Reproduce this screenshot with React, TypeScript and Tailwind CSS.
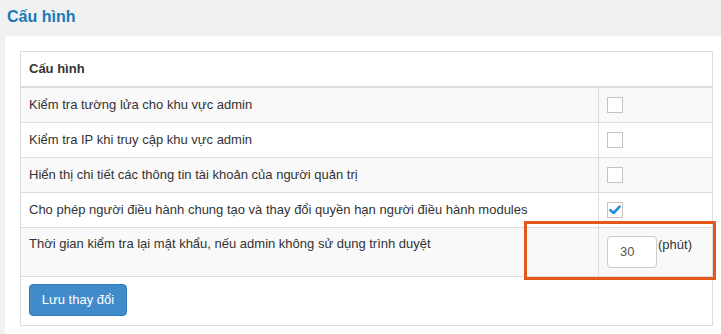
import React from 'react';

const rows = [
    { label: 'Kiểm tra tường lửa cho khu vực admin', checked: false },
    { label: 'Kiểm tra IP khi truy cập khu vực admin', checked: false },
    { label: 'Hiển thị chi tiết các thông tin tài khoản của người quản trị', checked: false },
    { label: 'Cho phép người điều hành chung tạo và thay đổi quyền hạn người điều hành modules', checked: true },
];

const Checkbox = ({ checked }: { checked: boolean }) => (
    <span className="flex items-center justify-center w-[16px] h-[16px] border border-[#c4c4c4] bg-white">
        {checked && (
            <svg width="12" height="10" viewBox="0 0 12 10">
                <path d="M1.5 5.2 L4.6 8 L10.6 1.6" fill="none" stroke="#2a8dd4" strokeWidth="2.6" strokeLinecap="round" strokeLinejoin="round" />
            </svg>
        )}
    </span>
);

const App = () => {
    return (
        <div className="relative w-[721px] h-[334px] overflow-hidden bg-[#f1f1f1] text-[13px] text-[#333]" style={{ fontFamily: '"Liberation Sans", Arial, sans-serif' }}>
            <div className="h-[36px] px-[7px] pt-[7px]">
                <h1 className="text-[16px] leading-[20px] font-bold text-[#1a7ab8]">Cấu hình</h1>
            </div>

            <div className="ml-[5px] h-[298px] bg-white pt-[15px] pl-[15px]">
                <div className="w-[693px] border border-[#ddd]">
                    <div className="h-[36px] flex items-center px-[8px] font-bold border-b-2 border-[#ddd]">Cấu hình</div>

                    {rows.map((row, i) => (
                        <div key={i} className={`flex h-[35px] border-b border-[#ddd] ${i % 2 === 0 ? 'bg-[#f9f9f9]' : 'bg-white'}`}>
                            <div className="flex-1 flex items-center px-[8px] border-r border-[#ddd]">{row.label}</div>
                            <div className="w-[113px] flex items-center pl-[8px]">
                                <Checkbox checked={row.checked} />
                            </div>
                        </div>
                    ))}

                    <div className="flex h-[49px] border-b border-[#ddd] bg-[#f9f9f9]">
                        <div className="flex-1 px-[8px] pt-[8px] leading-[16px] border-r border-[#ddd]">
                            Thời gian kiểm tra lại mật khẩu, nếu admin không sử dụng trình duyệt
                        </div>
                        <div className="w-[113px] flex items-start pl-[8px] pt-[8px]">
                            <div className="w-[50px] h-[32px] border border-[#ccc] rounded-[4px] bg-white flex items-center pl-[12px] text-[#555]">30</div>
                            <span className="ml-[1px] mt-[1px] leading-[16px]">(phút)</span>
                        </div>
                    </div>

                    <div className="h-[48px] px-[8px] pt-[7px]">
                        <button className="w-[98px] h-[32px] rounded-[4px] bg-[#428bca] border border-[#357ebd] text-white text-[13px]">
                            Lưu thay đổi
                        </button>
                    </div>
                </div>
            </div>

            <div className="absolute left-[524px] top-[221px] w-[192px] h-[59px] border-[3px] border-[#e4581c]" />
        </div>
    );
};

export default App;
